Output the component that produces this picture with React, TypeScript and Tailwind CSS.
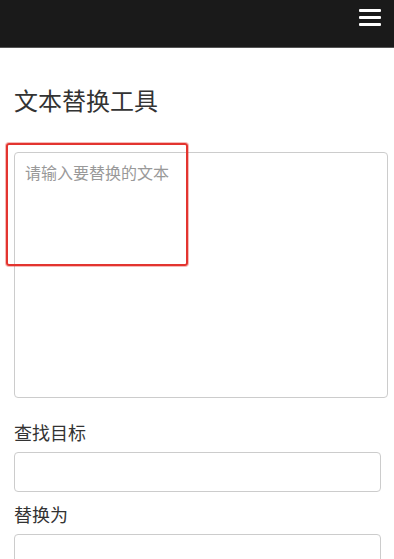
import React from "react";

export default function App() {
  const font = { fontFamily: '"Noto Sans CJK SC", "Noto Sans", sans-serif' };
  return (
    <div className="relative w-[394px] h-[559px] overflow-hidden bg-white" style={font}>
      <div className="h-[48px] bg-[#1a1a1a] border-b border-[#555555] flex items-start justify-end pr-[13px] pt-[9px]">
        <div className="flex flex-col gap-[4px] w-[22px]">
          <div className="h-[3px] bg-white rounded-[1px]" />
          <div className="h-[3px] bg-white rounded-[1px]" />
          <div className="h-[3px] bg-white rounded-[1px]" />
        </div>
      </div>
      <div className="px-[14px]">
        <h1 className="mt-[39px] h-[26px] leading-[26px] text-[24px] text-[#333333] font-normal">文本替换工具</h1>
        <textarea
          className="mt-[39px] block w-[374px] h-[246px] border border-[#cccccc] rounded-[4px] px-[10px] py-[8px] text-[16px] leading-[22px] placeholder:text-[#999999] resize-none outline-none"
          placeholder="请输入要替换的文本"
          style={font}
        />
        <div className="mt-[22px] h-[24px] leading-[24px] text-[18px] text-[#333333]">查找目标</div>
        <input className="mt-[8px] block w-[367px] h-[40px] border border-[#cccccc] rounded-[4px] outline-none" />
        <div className="mt-[10px] h-[24px] leading-[24px] text-[18px] text-[#333333]">替换为</div>
        <input className="mt-[8px] block w-[367px] h-[40px] border border-[#cccccc] rounded-[4px] outline-none" />
      </div>
      <div className="absolute left-[6px] top-[143px] w-[182px] h-[123px] border-2 border-[#e3342f] rounded-[3px] shadow-[0_0_0.5px_1px_rgba(229,57,53,0.35)] pointer-events-none" />
    </div>
  );
}
